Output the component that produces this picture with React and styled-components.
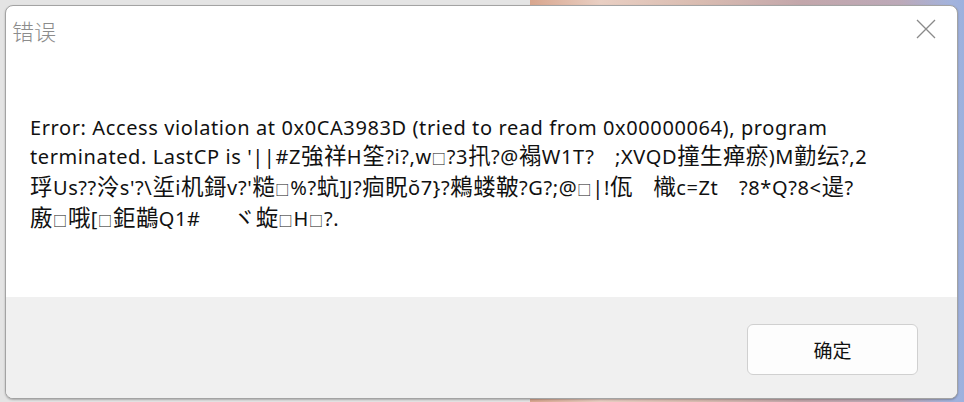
import React from 'react'
import styled, {createGlobalStyle} from 'styled-components'

const Global = createGlobalStyle`
  html, body { margin: 0; padding: 0; }
  body {
    font-family: "Noto Sans", "Noto Sans CJK SC", sans-serif;
    background: #e3e3e3;
  }
`;

const Desktop = styled.div`
  width: 964px;
  height: 402px;
  box-sizing: border-box;
  padding: 5px 6px 3px 5px;
  background:
    linear-gradient(to right,
      #e4e4e4 0, #e4e4e4 530px,
      #d8a68e 530px, #e9cfc3 600px, #d9bcb1 700px,
      #c3a7ab 800px, #bca9b8 900px, #a3b3dc 950px, #9db1de 964px);
`;

const Dialog = styled.div`
  height: 100%;
  box-sizing: border-box;
  display: flex;
  flex-direction: column;
  background: #ffffff;
  border: 1px solid #a3a3a3;
  border-radius: 8px;
  overflow: hidden;
  box-shadow: 0 1px 2px rgba(0, 0, 0, 0.25);
`;

const TitleBar = styled.div`
  height: 50px;
  display: flex;
  align-items: flex-start;
  justify-content: space-between;
  padding: 0 20px 0 6px;
`;

const Title = styled.div`
  margin-top: 11px;
  font-size: 22px;
  line-height: 26px;
  color: #8c8c8c;
  font-family: "Noto Sans CJK SC", sans-serif;
  font-weight: 300;
`;

const CloseBtn = styled.button`
  margin-top: 12px;
  width: 22px;
  height: 22px;
  padding: 0;
  border: none;
  background: transparent;
  display: flex;
  align-items: center;
  justify-content: center;
`;

const Body = styled.div`
  flex: 1;
  padding: 58px 10px 0 24px;
  font-size: 20px;
  letter-spacing: 0.6px;
  line-height: 28px;
  color: #111111;
`;

const Line = styled.div`
  white-space: pre;
`;

const Box = styled.span`
  font-size: 0.7em;
  letter-spacing: 1px;
`;

const Han = styled.span`
  font-size: 22.5px;
  letter-spacing: 0.4px;
`;

const Footer = styled.div`
  height: 101px;
  box-sizing: border-box;
  background: #f0f0f0;
  display: flex;
  justify-content: flex-end;
  align-items: flex-start;
  padding: 27px 39px 0 0;
`;

const OkButton = styled.button`
  width: 171px;
  height: 51px;
  box-sizing: border-box;
  background: #fdfdfd;
  border: 1px solid #d0d0d0;
  border-radius: 6px;
  font-family: "Noto Sans CJK SC", sans-serif;
  font-size: 19px;
  color: #111111;
`;

const lines = [
  'Error: Access violation at 0x0CA3983D (tried to read from 0x00000064), program',
  "terminated. LastCP is '||#Z強祥H筌?i?,w□?3扟?@褟W1T?　;XVQD撞生瘅瘀)M勭纭?,2",
  "琈Us??泠s'?\\垽i机鎶v?'糙□%?蚢]J?痐眖ŏ7}?鶆蝼鞁?G?;@□|!佤　樴c=Zt　?8*Q?8<遈?",
  '廒□哦[□鉅鶓Q1#　  ヾ蜁□H□?.',
]

// split a line into runs: replacement boxes drawn small, ideographs a bit larger
function renderLine(text) {
  const parts = text.match(/□|[\u3040-\u9fff]+|[^□\u3040-\u9fff]+/g) || []
  return parts.map((p, i) => {
    if (p === '□') return <Box key={i}>□</Box>
    if (/[\u3040-\u9fff]/.test(p)) return <Han key={i}>{p}</Han>
    return p
  })
}

function App() {
  return (
    <Desktop>
      <Global />
      <Dialog>
        <TitleBar>
          <Title>错误</Title>
          <CloseBtn aria-label="close">
            <svg width="20" height="20" viewBox="0 0 20 20">
              <path d="M1 1 L19 19 M19 1 L1 19" stroke="#8a8a8a" strokeWidth="1.3" fill="none" />
            </svg>
          </CloseBtn>
        </TitleBar>
        <Body>
          {lines.map((l, i) => <Line key={i}>{renderLine(l)}</Line>)}
        </Body>
        <Footer>
          <OkButton>确定</OkButton>
        </Footer>
      </Dialog>
    </Desktop>
  )
}

export default App
